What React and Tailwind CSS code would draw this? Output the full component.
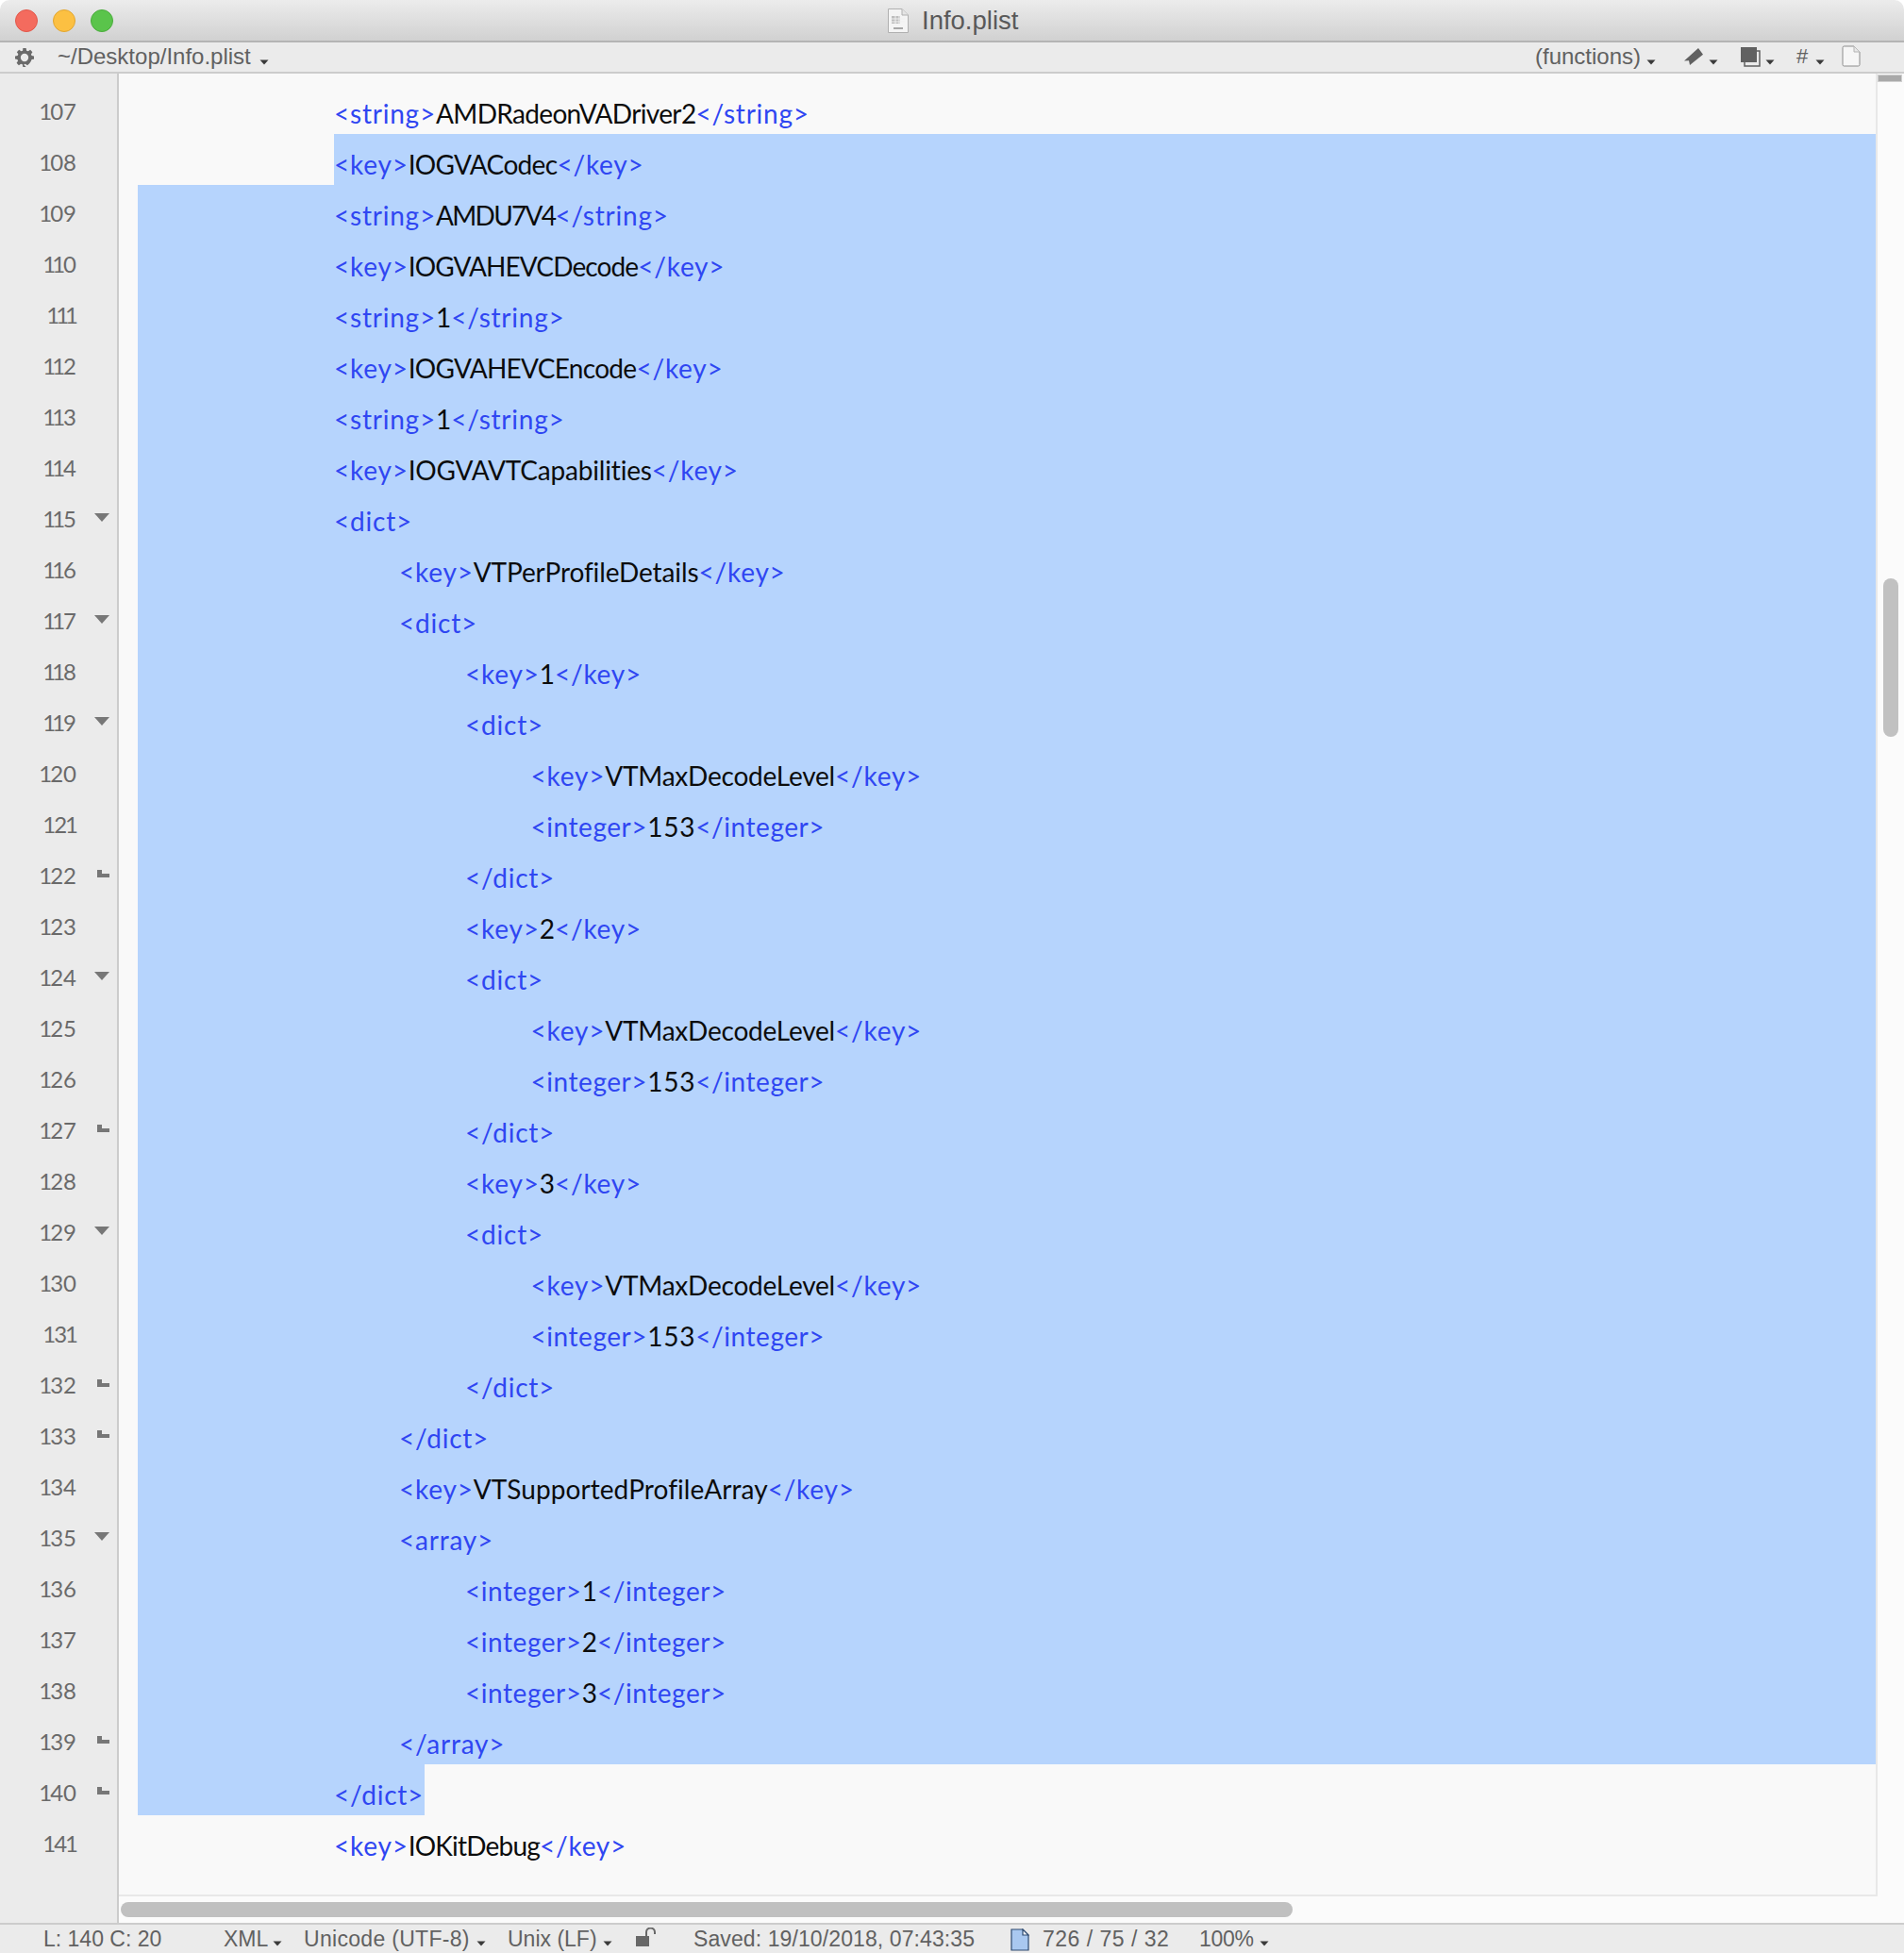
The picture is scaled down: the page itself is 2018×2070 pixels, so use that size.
const LINES = [
  [107, 0, '<string>AMDRadeonVADriver2</string>'],
  [108, 0, '<key>IOGVACodec</key>'],
  [109, 0, '<string>AMDU7V4</string>'],
  [110, 0, '<key>IOGVAHEVCDecode</key>'],
  [111, 0, '<string>1</string>'],
  [112, 0, '<key>IOGVAHEVCEncode</key>'],
  [113, 0, '<string>1</string>'],
  [114, 0, '<key>IOGVAVTCapabilities</key>'],
  [115, 0, '<dict>', 'open'],
  [116, 1, '<key>VTPerProfileDetails</key>'],
  [117, 1, '<dict>', 'open'],
  [118, 2, '<key>1</key>'],
  [119, 2, '<dict>', 'open'],
  [120, 3, '<key>VTMaxDecodeLevel</key>'],
  [121, 3, '<integer>153</integer>'],
  [122, 2, '</dict>', 'close'],
  [123, 2, '<key>2</key>'],
  [124, 2, '<dict>', 'open'],
  [125, 3, '<key>VTMaxDecodeLevel</key>'],
  [126, 3, '<integer>153</integer>'],
  [127, 2, '</dict>', 'close'],
  [128, 2, '<key>3</key>'],
  [129, 2, '<dict>', 'open'],
  [130, 3, '<key>VTMaxDecodeLevel</key>'],
  [131, 3, '<integer>153</integer>'],
  [132, 2, '</dict>', 'close'],
  [133, 1, '</dict>', 'close'],
  [134, 1, '<key>VTSupportedProfileArray</key>'],
  [135, 1, '<array>', 'open'],
  [136, 2, '<integer>1</integer>'],
  [137, 2, '<integer>2</integer>'],
  [138, 2, '<integer>3</integer>'],
  [139, 1, '</array>', 'close'],
  [140, 0, '</dict>', 'close'],
  [141, 0, '<key>IOKitDebug</key>'],
];

const INDENT = ['pl-[208px]', 'pl-[277px]', 'pl-[347px]', 'pl-[416.5px]'];

const WORD_TRACK = {
  AMDRadeonVADriver2: 'tracking-[-0.65px]',
  IOGVACodec: 'tracking-[-0.66px]',
  AMDU7V4: 'tracking-[-1.7px]',
  IOGVAHEVCDecode: 'tracking-[-0.88px]',
  IOGVAHEVCEncode: 'tracking-[-0.7px]',
  IOGVAVTCapabilities: 'tracking-[-0.18px]',
  VTPerProfileDetails: 'tracking-[-0.1px]',
  VTMaxDecodeLevel: 'tracking-[-0.2px]',
  VTSupportedProfileArray: 'tracking-[0.08px]',
  IOKitDebug: 'tracking-[-0.8px]',
  153: 'tracking-[0.8px]',
};

function tagClass(tag) {
  return tag.includes('integer') ? 'tracking-[0.55px]' : 'tracking-[0.78px]';
}

function Arrow({ className = '' }) {
  return (
    <svg width="10" height="6" viewBox="0 0 10 6" className={'shrink-0 ' + className}>
      <path d="M0.5 0.5H9.5L5 5.5Z" fill="#3a3a3a" />
    </svg>
  );
}

function Code({ text }) {
  const parts = text.split(/(<[^>]+>)/).filter(Boolean);
  return parts.map((p, i) =>
    p[0] === '<' ? (
      <span key={i} className={'text-[#2f46f2] ' + tagClass(p)}>{p}</span>
    ) : (
      <span key={i} className={'text-[#0c0c0c] ' + (WORD_TRACK[p] || '')}>{p}</span>
    )
  );
}

function CodeLine({ n, level, text }) {
  const inner = (
    <div className={'h-full pt-[5px] leading-[54px] whitespace-pre ' + INDENT[level]}>
      <Code text={text} />
    </div>
  );
  if (n === 107 || n === 141) return <div className="h-[54px] pl-[20px]">{inner}</div>;
  if (n === 108)
    return (
      <div className="h-[54px] pl-[228px]">
        <div className="h-full bg-[#b6d4fd] pt-[5px] leading-[54px] whitespace-pre">
          <Code text={text} />
        </div>
      </div>
    );
  if (n === 140)
    return (
      <div className="h-[54px] pl-[20px]">
        <div className="h-full w-[304px] bg-[#b6d4fd] overflow-hidden">{inner}</div>
      </div>
    );
  return (
    <div className="h-[54px] pl-[20px]">
      <div className="h-full bg-[#b6d4fd]">{inner}</div>
    </div>
  );
}

function Digits({ n }) {
  return String(n)
    .split('')
    .map((d, i) =>
      d === '1' ? (
        <span key={i} className="inline-block -mx-[2px]">1</span>
      ) : (
        <span key={i}>{d}</span>
      )
    );
}

function GutterRow({ n, fold }) {
  return (
    <div className="h-[54px] flex">
      <div className="w-[81px] pt-[3px] leading-[54px] text-right text-[#6a6a6a] text-[24px]">
        <Digits n={n} />
      </div>
      <div className="relative flex-1">
        {fold === 'open' && (
          <svg width="16" height="9" viewBox="0 0 16 9" className="absolute left-[19px] top-[24px]">
            <path d="M0 0H16L8 9Z" fill="#777777" />
          </svg>
        )}
        {fold === 'close' && (
          <svg width="13" height="8" viewBox="0 0 13 8" className="absolute left-[22px] top-[24px]">
            <path d="M0 0H5V4H13V8H0Z" fill="#777777" />
          </svg>
        )}
      </div>
    </div>
  );
}

export default function App() {
  return (
    <div className="h-[2070px] w-[2018px] flex flex-col overflow-hidden bg-white text-[#5f5f5f] font-['Lato',sans-serif]">
      {/* Title bar */}
      <div className="h-[45px] shrink-0 relative rounded-t-[10px] bg-gradient-to-b from-[#ececec] to-[#d1d1d1] border-b-2 border-[#b4b4b4] flex items-center">
        <div className="flex items-center pl-[16px] gap-[16px]">
          <span className="w-[24px] h-[24px] rounded-full bg-[#f46b5e] border border-[#e2574a]" />
          <span className="w-[24px] h-[24px] rounded-full bg-[#fcc042] border border-[#e2a630]" />
          <span className="w-[24px] h-[24px] rounded-full bg-[#5ac44b] border border-[#4aac3c]" />
        </div>
        <div className="ml-[820px] flex items-center">
          <svg width="24" height="28" viewBox="0 0 24 28" className="mt-[1px]">
            <path d="M1.5 1.5H16L22.5 8V26.5H1.5Z" fill="#f4f4f4" stroke="#b0b0b0" />
            <path d="M16 1.5V8H22.5" fill="#e4e4e4" stroke="#b0b0b0" />
            <path d="M5 9H14V17H5Z" fill="#bdbdbd" />
            <path d="M5 12H19M5 15H19M9 9V17M13 9V17" stroke="#f0f0f0" />
            <path d="M7 22H17" stroke="#a8a8a8" strokeWidth="2" />
          </svg>
          <span className="ml-[13px] text-[27.5px] leading-none text-[#595959] font-['Liberation_Sans',sans-serif]">Info.plist</span>
        </div>
      </div>

      {/* Toolbar */}
      <div className="h-[33px] shrink-0 bg-[#ebebeb] border-b-2 border-[#cccccc] flex items-center text-[24px] text-[#616161] font-['Liberation_Sans',sans-serif]">
        <svg width="20" height="20" viewBox="0 0 24 24" className="ml-[16px] shrink-0">
          <path fillRule="evenodd" fill="#6a6a6a" d="M10 0h4l.6 3.2 2 .8L19.3 2.200l2.800 2.800-1.800 2.700.8 2 3.200.6v3.600l-3.200.6-.8 2-1.800 2.700-2.800 2.800-2.700-1.800-2 .8L14 24h-4l-.6-3.200-2-.8-2.700 1.800-2.800-2.800 1.800-2.700-.8-2L0 13.700v-3.600l3.200-.6.800-2L2.200 5l2.800-2.800L7.700 4l2-.8ZM12 7a5 5 0 1 0 0 10 5 5 0 0 0 0-10Z" />
        </svg>
        <span className="ml-[25px] mb-[2px] w-[206px] leading-none whitespace-nowrap">~/Desktop/Info.plist</span>
        <Arrow className="ml-[8px] mt-[10px]" />
        <div className="flex-1" />
        <span className="mb-[2px] leading-none whitespace-nowrap w-[111px]">(functions)</span>
        <Arrow className="ml-[7px] mt-[10px]" />
        <svg width="20" height="18" viewBox="0 0 20 18" className="ml-[30px] mb-[2px]">
          <path d="M0 13.5L15 0L20 6.700L6 18L5 13.300Z" fill="#616161" />
        </svg>
        <Arrow className="ml-[6px] mt-[10px]" />
        <svg width="21" height="21" viewBox="0 0 21 21" className="ml-[24px] mb-[1px]">
          <path d="M4 4H20V20H4Z" fill="#ebebeb" stroke="#616161" strokeWidth="1.500" />
          <path d="M0 0H17V16H0Z" fill="#616161" />
        </svg>
        <Arrow className="ml-[5px] mt-[10px]" />
        <span className="ml-[23px] mb-[2px] w-[13px] leading-none text-[22px]">#</span>
        <Arrow className="ml-[7px] mt-[10px]" />
        <svg width="20" height="23" viewBox="0 0 20 23" className="ml-[18px] mb-[2px]">
          <path d="M1 2.500Q1 1 2.500 1H13L19 7V20.500Q19 22 17.500 22H2.500Q1 22 1 20.500Z" fill="#f6f6f6" stroke="#8c8c8c" />
          <path d="M13 1V7H19" fill="#e8e8e8" stroke="#b4b4b4" />
        </svg>
        <div className="w-[46px] shrink-0" />
      </div>

      {/* Body */}
      <div className="flex-1 min-h-0 flex">
        <div className="w-[126px] shrink-0 bg-[#ebebeb] border-r-2 border-[#cccccc] pt-[10px] overflow-hidden">
          {LINES.map(([n, , , fold]) => (
            <GutterRow key={n} n={n} fold={fold} />
          ))}
        </div>
        <div className="flex-1 min-w-0 flex flex-col bg-[#fbfbfb]">
          <div className="flex-1 min-h-0 flex">
            <div className="flex-1 min-w-0 bg-[#f9f9f9] border-r-2 border-b-2 border-[#e8e8e8] pt-[10px] text-[28px] overflow-hidden">
              {LINES.map(([n, level, text]) => (
                <CodeLine key={n} n={n} level={level} text={text} />
              ))}
            </div>
            <div className="w-[28px] shrink-0 bg-[#fbfbfb] pt-[1px]">
              <div className="w-[26px] h-[8px] bg-[#a9a9a9] border border-[#d0d0d0]" />
              <div className="mt-[526px] ml-[6px] w-[16px] h-[168px] rounded-full bg-[#c1c1c1]" />
            </div>
          </div>
          <div className="h-[28px] shrink-0 pt-[6px] pl-[2px]">
            <div className="w-[1242px] h-[16px] rounded-full bg-[#c0c0c0]" />
          </div>
        </div>
      </div>

      {/* Status bar */}
      <div className="h-[32px] shrink-0 bg-[#ebebeb] border-t-2 border-[#cccccc] flex items-center text-[23px] text-[#616161] font-['Liberation_Sans',sans-serif]">
        <span className="ml-[46px] w-[125px] leading-none whitespace-nowrap">L: 140 C: 20</span>
        <span className="ml-[66px] w-[48px] leading-none whitespace-nowrap">XML</span>
        <Arrow className="ml-[4px] mt-[10px]" />
        <span className="ml-[23px] w-[175px] leading-none whitespace-nowrap tracking-[0.3px]">Unicode (UTF-8)</span>
        <Arrow className="ml-[8px] mt-[10px]" />
        <span className="ml-[23px] w-[94px] leading-none whitespace-nowrap">Unix (LF)</span>
        <Arrow className="ml-[7px] mt-[10px]" />
        <svg width="21" height="21" viewBox="0 0 21 21" className="ml-[25px] mb-[4px]">
          <path d="M0 9H14V20H0Z" fill="#686868" />
          <path d="M11 9V5A4.500 4.500 0 0 1 20 5V7" fill="none" stroke="#686868" strokeWidth="2" />
        </svg>
        <span className="ml-[40px] w-[298px] leading-none whitespace-nowrap tracking-[0.1px]">Saved: 19/10/2018, 07:43:35</span>
        <svg width="20" height="24" viewBox="0 0 20 24" className="ml-[38px] mt-[2px]">
          <path d="M1 1H13L19 7V23H1Z" fill="#a9c8f0" stroke="#2e4a70" strokeWidth="1.200" />
          <path d="M13 1V7H19Z" fill="#f4f8fd" stroke="#2e4a70" strokeWidth="1.200" />
        </svg>
        <span className="ml-[14px] w-[134px] leading-none whitespace-nowrap tracking-[0.5px]">726 / 75 / 32</span>
        <span className="ml-[32px] w-[57px] leading-none whitespace-nowrap tracking-[-0.3px]">100%</span>
        <Arrow className="ml-[7px] mt-[10px]" />
      </div>
    </div>
  );
}
